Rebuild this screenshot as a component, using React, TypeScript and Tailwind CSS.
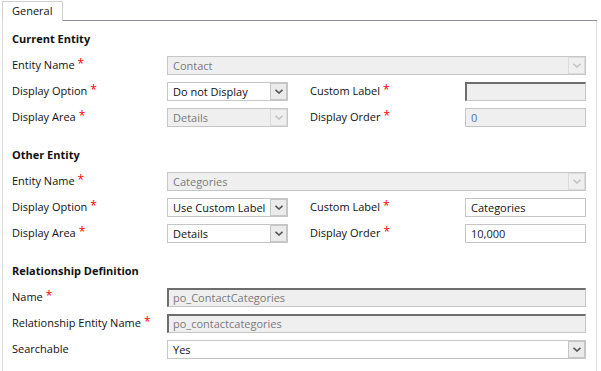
import React from 'react';

const Star = () => <span className="ml-[3px] text-[#ff0000] relative -top-[1px] text-[12px]">*</span>;

const Chevron = ({ disabled }: { disabled?: boolean }) => (
  <svg width="8" height="5" viewBox="0 0 8 5">
    <path d="M0.5 0.8 L4 4 L7.5 0.8" fill="none" stroke={disabled ? '#c4c4c4' : '#555'} strokeWidth="1.6" />
  </svg>
);

type BoxProps = { value?: string; disabled?: boolean; inset?: boolean; select?: boolean; wide?: boolean; color?: string };

const Box = ({ value = '', disabled, inset, select, wide, color }: BoxProps) => {
  const bg = disabled || inset ? 'bg-[#efefef]' : 'bg-white';
  const border = inset
    ? 'border border-[#c6c6c6] border-t-2 border-l-2 border-t-[#6d6d6d] border-l-[#6d6d6d]'
    : 'border border-[#c6c6c6]';
  return (
    <div className={`${wide ? 'w-[419px]' : 'w-[121px]'} h-[19px] flex items-center ${bg} ${border}`}>
      <span
        className={`flex-1 whitespace-nowrap ${inset ? 'pl-[4px]' : 'pl-[5px]'} leading-none`}
        style={{ color: color ?? (disabled ? '#7a7a7a' : '#111') }}
      >
        {value}
      </span>
      {select && (
        <div
          className={`w-[17px] h-[17px] flex items-center justify-center border ${
            disabled ? 'border-[#dcdcdc] bg-[#efefef]' : 'border-[#c6c6c6] bg-[#ebebeb]'
          }`}
        >
          <Chevron disabled={disabled} />
        </div>
      )}
    </div>
  );
};

const Label = ({ text, req, w = 'w-[155px]' }: { text: string; req?: boolean; w?: string }) => (
  <div className={`${w} shrink-0 flex items-center`}>
    <span>{text}</span>
    {req && <Star />}
  </div>
);

const Row = ({ children }: { children: React.ReactNode }) => <div className="h-[26px] flex items-center">{children}</div>;

const Header = ({ text }: { text: string }) => (
  <div className="h-[26px] flex items-center font-bold">{text}</div>
);

const App = () => {
  return (
    <div
      className="w-[601px] h-[371px] bg-white text-[11px] text-[#111] overflow-hidden"
      style={{ fontFamily: '"Open Sans", "Noto Sans", sans-serif' }}
    >
      <div className="flex h-[21px]">
        <div className="ml-[2px] mt-[1px] w-[61px] h-[20px] border border-b-0 border-[#d0d0d0] pl-[9px] flex items-center">
          General
        </div>
        <div className="w-[534px] border-b border-[#8e8e9a]" />
      </div>
      <div className="ml-[2px] w-[595px] h-[350px] border-l border-r border-l-[#dcdcdc] border-r-[#e2e2e2] pt-[5px] pl-[9px] flex flex-col gap-[12px]">
        <div>
          <Header text="Current Entity" />
          <Row>
            <Label text="Entity Name" req />
            <Box value="Contact" disabled select wide />
          </Row>
          <Row>
            <Label text="Display Option" req />
            <Box value="Do not Display" select />
            <div className="w-[22px]" />
            <Label text="Custom Label" req />
            <Box inset />
          </Row>
          <Row>
            <Label text="Display Area" req />
            <Box value="Details" disabled select />
            <div className="w-[22px]" />
            <Label text="Display Order" req />
            <Box value="0" disabled color="#4d78a8" />
          </Row>
        </div>
        <div>
          <Header text="Other Entity" />
          <Row>
            <Label text="Entity Name" req />
            <Box value="Categories" disabled select wide />
          </Row>
          <Row>
            <Label text="Display Option" req />
            <Box value="Use Custom Label" select />
            <div className="w-[22px]" />
            <Label text="Custom Label" req />
            <Box value="Categories" />
          </Row>
          <Row>
            <Label text="Display Area" req />
            <Box value="Details" select />
            <div className="w-[22px]" />
            <Label text="Display Order" req />
            <Box value="10,000" color="#1a1a3a" />
          </Row>
        </div>
        <div>
          <Header text="Relationship Definition" />
          <Row>
            <Label text="Name" req />
            <Box value="po_ContactCategories" inset wide color="#7a7a7a" />
          </Row>
          <Row>
            <Label text="Relationship Entity Name" req />
            <Box value="po_contactcategories" inset wide color="#7a7a7a" />
          </Row>
          <Row>
            <Label text="Searchable" />
            <Box value="Yes" select wide />
          </Row>
        </div>
      </div>
    </div>
  );
};

export default App;
